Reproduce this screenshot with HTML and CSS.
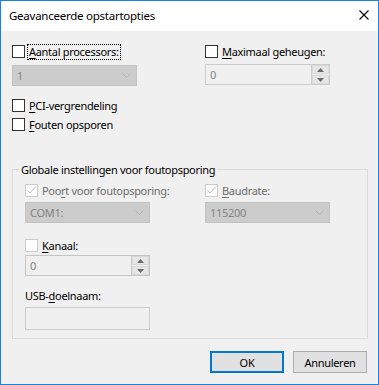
FILE: index.html
```html
<!DOCTYPE html>
<html lang="nl">
<head>
<meta charset="utf-8">
<title>Geavanceerde opstartopties</title>
<link rel="stylesheet" href="styles.css">
</head>
<body>
<div class="window">
  <div class="titlebar">
    <span class="title">Geavanceerde opstartopties</span>
    <svg class="close" width="10" height="10" viewBox="0 0 10 10"><path d="M0.5 0.5L9.5 9.5M9.5 0.5L0.5 9.5" stroke="#000" stroke-width="1.1" fill="none"/></svg>
  </div>
  <div class="content">
    <div class="top-grid">
      <div class="col">
        <div class="check"><span class="box"></span><span class="lbl focus"><u>A</u>antal processors:</span></div>
        <div class="combo combo-top"><span class="val">1</span><svg class="chev" width="9" height="5" viewBox="0 0 9 5"><path d="M0.5 0.5L4.5 4.5L8.5 0.5" stroke="#b4b4b4" fill="none"/></svg></div>
        <div class="check check-pci"><span class="box"></span><span class="lbl"><u>P</u>CI-vergrendeling</span></div>
        <div class="check check-fout"><span class="box"></span><span class="lbl"><u>F</u>outen opsporen</span></div>
      </div>
      <div class="col">
        <div class="check"><span class="box"></span><span class="lbl"><u>M</u>aximaal geheugen:</span></div>
        <div class="spin spin-top"><span class="val">0</span>
          <span class="btns">
            <span class="sbtn"><svg width="7" height="4" viewBox="0 0 7 4"><path d="M0 4L3.5 0L7 4Z" fill="#6a6a6a"/></svg></span>
            <span class="sbtn"><svg width="7" height="4" viewBox="0 0 7 4"><path d="M0 0L3.5 4L7 0Z" fill="#6a6a6a"/></svg></span>
          </span>
        </div>
      </div>
    </div>

    <fieldset class="group">
      <legend class="legend">Globale instellingen voor foutopsporing</legend>
      <div class="group-grid">
        <div class="col">
          <div class="check disabled"><span class="box box-dis"><svg width="11" height="11" viewBox="0 0 11 11"><path d="M1.5 5.5L4 8L9.5 2" stroke="#bdbdbd" stroke-width="1" fill="none"/></svg></span><span class="lbl">Poo<u>r</u>t voor foutopsporing:</span></div>
          <div class="combo combo-grp"><span class="val">COM1:</span><svg class="chev" width="9" height="5" viewBox="0 0 9 5"><path d="M0.5 0.5L4.5 4.5L8.5 0.5" stroke="#b4b4b4" fill="none"/></svg></div>
          <div class="check check-kanaal"><span class="box box-dis"></span><span class="lbl"><u>K</u>anaal:</span></div>
          <div class="spin spin-grp"><span class="val">0</span>
            <span class="btns">
              <span class="sbtn"><svg width="7" height="4" viewBox="0 0 7 4"><path d="M0 4L3.5 0L7 4Z" fill="#6a6a6a"/></svg></span>
              <span class="sbtn"><svg width="7" height="4" viewBox="0 0 7 4"><path d="M0 0L3.5 4L7 0Z" fill="#6a6a6a"/></svg></span>
            </span>
          </div>
          <div class="plain-label">USB-<u>d</u>oelnaam:</div>
          <div class="textbox"></div>
        </div>
        <div class="col">
          <div class="check disabled"><span class="box box-dis"><svg width="11" height="11" viewBox="0 0 11 11"><path d="M1.5 5.5L4 8L9.5 2" stroke="#bdbdbd" stroke-width="1" fill="none"/></svg></span><span class="lbl"><u>B</u>audrate:</span></div>
          <div class="combo combo-grp"><span class="val">115200</span><svg class="chev" width="9" height="5" viewBox="0 0 9 5"><path d="M0.5 0.5L4.5 4.5L8.5 0.5" stroke="#b4b4b4" fill="none"/></svg></div>
        </div>
      </div>
    </fieldset>

    <div class="buttons">
      <button class="btn btn-default">OK</button>
      <button class="btn">Annuleren</button>
    </div>
  </div>
</div>
</body>
</html>
```
FILE: styles.css
```css
html, body {
  margin: 0;
  padding: 0;
  background: #f0f0f0;
}
body {
  font-family: "Noto Sans", "DejaVu Sans", sans-serif;
  font-size: 11px;
  letter-spacing: -0.3px;
  color: #000;
}
.window {
  width: 379px;
  height: 385px;
  box-sizing: border-box;
  border: 1px solid #1883d7;
  background: #f0f0f0;
  overflow: hidden;
}
.titlebar {
  height: 30px;
  background: #fff;
  display: flex;
  justify-content: space-between;
  align-items: flex-start;
  padding: 0 9px 0 8px;
}
.title {
  line-height: 30px;
  font-size: 11.5px;
  letter-spacing: -0.25px;
}
.close {
  margin-top: 9px;
  display: block;
}
.content {
  padding: 13px 10px 0 11px;
}
.top-grid {
  display: grid;
  grid-template-columns: 193px 1fr;
}
.col {
  display: flex;
  flex-direction: column;
  align-items: flex-start;
}
.check {
  display: flex;
  align-items: center;
  height: 15px;
}
.box {
  width: 13px;
  height: 13px;
  box-sizing: border-box;
  border: 1px solid #333;
  background: #fff;
  display: flex;
  align-items: center;
  justify-content: center;
}
.box-dis {
  border-color: #cccccc;
  background: #fff;
}
.lbl {
  margin-left: 3px;
  line-height: 14px;
  padding: 0 1px;
}
.focus {
  outline: 1px dotted #000;
}
.disabled .lbl {
  color: #6d6d6d;
}
.combo {
  width: 125px;
  height: 21px;
  box-sizing: border-box;
  border: 1px solid #c2c2c2;
  background: #cccccc;
  display: flex;
  align-items: center;
  justify-content: space-between;
  padding: 0 5px 0 4px;
  color: #838383;
}
.combo-top { margin-top: 6px; }
.check-pci { margin-top: 12px; }
.check-fout { margin-top: 4px; }
.spin {
  width: 125px;
  height: 21px;
  box-sizing: border-box;
  border: 1px solid #cccccc;
  background: #f0f0f0;
  display: flex;
  align-items: stretch;
  color: #838383;
}
.spin .val {
  flex: 1;
  padding-left: 4px;
  display: flex;
  align-items: center;
}
.btns {
  width: 17px;
  display: flex;
  flex-direction: column;
  gap: 1px;
  padding: 0;
  border-left: 1px solid #cccccc;
}
.sbtn {
  flex: 1;
  background: #e6e6e6;
  border: 1px solid #d9d9d9;
  display: flex;
  align-items: center;
  justify-content: center;
}
.spin-top { margin-top: 5px; }
.group {
  margin: 30px 0 0 0;
  padding: 0 0 8px 0;
  width: 356px;
  box-sizing: border-box;
  border: 1px solid #dcdcdc;
  min-inline-size: 0;
}
.legend {
  margin-left: 6px;
  padding: 0 2px;
  line-height: 15px;
}
.group-grid {
  display: grid;
  grid-template-columns: 180px 1fr;
  padding: 6px 0 0 12px;
}
.combo-grp { margin-top: 4px; }
.check-kanaal { margin-top: 15px; }
.spin-grp { margin-top: 2px; border-color: #c4c4c4; }
.plain-label {
  margin-top: 12px;
  line-height: 15px;
}
.textbox {
  margin-top: 4px;
  width: 125px;
  height: 23px;
  box-sizing: border-box;
  border: 1px solid #cccccc;
  background: #f0f0f0;
}
.buttons {
  display: flex;
  justify-content: flex-end;
  gap: 9px;
  margin-top: 12px;
  padding-right: 1px;
}
.btn {
  width: 74px;
  height: 22px;
  box-sizing: border-box;
  border: 1px solid #adadad;
  background: #e1e1e1;
  font-family: inherit;
  font-size: 11px;
  letter-spacing: -0.3px;
  color: #000;
  padding: 0;
}
.btn-default {
  border: 2px solid #0078d7;
}
u {
  text-decoration: underline;
  text-underline-offset: 2px;
}
```
